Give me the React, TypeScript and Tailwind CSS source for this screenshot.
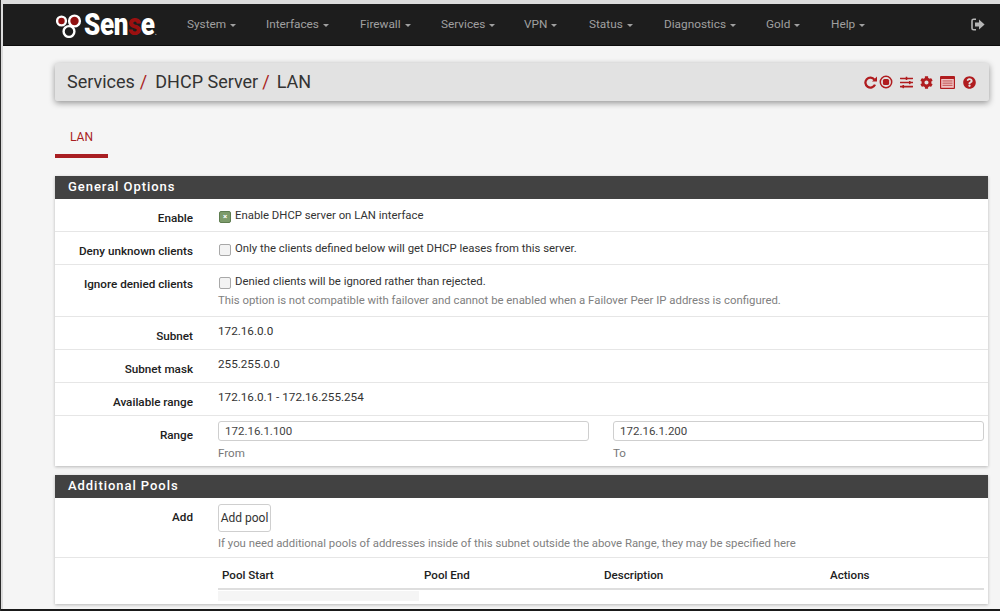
import React from "react";
import { FaSlidersH, FaCog, FaQuestionCircle } from "react-icons/fa";

const nav: [string, string][] = [
  ["System", "w-[79px]"],
  ["Interfaces", "w-[94px]"],
  ["Firewall", "w-[81px]"],
  ["Services", "w-[83px]"],
  ["VPN", "w-[65px]"],
  ["Status", "w-[75px]"],
  ["Diagnostics", "w-[102px]"],
  ["Gold", "w-[65px]"],
  ["Help", "w-[60px]"],
];

function Logo() {
  return (
    <div className="flex items-center w-[132px]">
      <svg width="27" height="26" viewBox="0 0 27 26" className="shrink-0">
        <circle cx="6.5" cy="9" r="4.4" fill="#8f1010" stroke="#fff" strokeWidth="2.4" />
        <circle cx="19.5" cy="9" r="5.4" fill="#8f1010" stroke="#fff" strokeWidth="2.4" />
        <circle cx="14" cy="19.5" r="5.4" fill="#1d1d1d" stroke="#fff" strokeWidth="2.4" />
      </svg>
      <span className="text-[31px] font-black text-white leading-none tracking-[-0.5px] inline-block origin-left scale-x-[0.84] font-['Roboto',sans-serif] whitespace-nowrap ml-[2px]">
        Sen<span className="text-[#9c1010]">s</span>e<span className="text-[8px] text-[#aaa]">.</span>
      </span>
    </div>
  );
}

function LabelCell({ label }: { label: string }) {
  return <div className="w-[138px] shrink-0 pt-[12px] text-right text-[11.7px] leading-[15px] font-medium text-[#212121]">{label}</div>;
}

function Row({ label, children, className = "" }: { label: string; children: React.ReactNode; className?: string }) {
  return (
    <div className={`flex border-b border-[#e6e6e6] ${className}`}>
      <LabelCell label={label} />
      <div className="flex-1 pl-[25px] min-w-0">{children}</div>
    </div>
  );
}

function Check({ on, text }: { on?: boolean; text: string }) {
  return (
    <div className="flex items-center pt-[9px] leading-[15px] text-[11.35px] text-[#333]">
      <span className={`w-[12px] h-[12px] ml-[1px] mr-[4px] mt-[3px] rounded-[2px] border flex items-center justify-center text-[8px] leading-none font-bold ${on ? "bg-[#7d9b6b] border-[#5f7d50] text-white" : "bg-[#f3f3f3] border-[#a8a8a8]"}`}>
        {on ? "×" : ""}
      </span>
      <span>{text}</span>
    </div>
  );
}

function Value({ text }: { text: string }) {
  return <div className="pt-[7px] text-[11.7px] leading-[15px] text-[#333]">{text}</div>;
}

function Head({ title }: { title: string }) {
  return (
    <div className="h-[23px] bg-[#424242] text-white text-[13px] font-medium tracking-[0.95px] leading-[22px] pl-[13px]">{title}</div>
  );
}

function Field({ value, hint }: { value: string; hint: string }) {
  return (
    <div className="w-[371px]">
      <div className="h-[20px] border border-[#cfcfcf] rounded-[3px] bg-white pl-[6px] text-[11.5px] leading-[18px] text-[#444]">{value}</div>
      <div className="mt-[5px] text-[11.6px] leading-[15px] text-[#777]">{hint}</div>
    </div>
  );
}

function RedoIcon() {
  return (
    <svg width="13" height="13" viewBox="0 0 13 13" className="mr-[2px]">
      <path d="M10.4 3.6A5 5 0 1 0 11 8.6" fill="none" stroke="#b01c1f" strokeWidth="2.3" />
      <path d="M8 5.4 13 5.4 13 .4Z" fill="#b01c1f" />
    </svg>
  );
}

function StopIcon() {
  return (
    <svg width="14" height="14" viewBox="0 0 14 14" className="mr-[7px]">
      <circle cx="7" cy="7" r="5.7" fill="none" stroke="#b01c1f" strokeWidth="1.5" />
      <rect x="3.9" y="3.9" width="6.2" height="6.2" rx="1.6" fill="#b01c1f" />
    </svg>
  );
}

function ListIcon() {
  return (
    <svg width="15" height="13" viewBox="0 0 15 13" className="mr-[8px]">
      <rect x="0" y="0" width="15" height="13" rx="1" fill="#b01c1f" />
      <rect x="1.2" y="3" width="12.6" height="8.8" fill="#f0c4c4" />
      <rect x="2.5" y="4.4" width="10" height="1.1" fill="#c65a5a" />
      <rect x="2.5" y="6.6" width="10" height="1.1" fill="#c65a5a" />
      <rect x="2.5" y="8.8" width="10" height="1.1" fill="#c65a5a" />
    </svg>
  );
}

function LogoutIcon() {
  return (
    <svg width="14" height="13" viewBox="0 0 14 13" className="ml-auto mr-[15px]">
      <path d="M5 1.2H2.6C1.7 1.2 1 1.9 1 2.8v7.4c0 .9.7 1.6 1.6 1.6H5" fill="none" stroke="#b5b5b5" strokeWidth="1.6" />
      <path d="M4 4.6h4V1.6L13.6 6.5 8 11.4V8.4H4z" fill="#b5b5b5" />
    </svg>
  );
}

export default function App() {
  return (
    <div className="w-[1000px] h-[611px] overflow-hidden bg-[#dcdcdc] border-l border-[#2a2a2a] pt-[4px] font-['Roboto',sans-serif]">
      <div className="h-[605px] ml-[2px] bg-[#f5f5f5] flex flex-col">
        <header className="h-[42px] shrink-0 bg-[#1d1d1d] border-b border-[#0c0c0c] flex items-center pl-[52px] text-[11.8px] text-[#a0a0a0]">
          <Logo />
          <nav className="flex items-center">
            {nav.map(([n, w]) => (
              <div key={n} className={`${w} flex items-center`}>
                <span>{n}</span>
                <span className="ml-[4px] mt-[1px] w-0 h-0 border-x-[3px] border-x-transparent border-t-[3px] border-t-[#a0a0a0]" />
              </div>
            ))}
          </nav>
          <LogoutIcon />
        </header>

        <main className="flex-1 pl-[52px] pr-[3px] min-h-0 overflow-hidden">
          <div className="mt-[17px] w-[934px] h-[38px] bg-[#e2e2e2] rounded-[2px] shadow-[0_2px_6px_rgba(0,0,0,0.4)] flex items-center pl-[12px] pr-[13px]">
            <div className="text-[18px] text-[#333] whitespace-nowrap flex-1 flex pb-[1px]">
              <span>Services</span>
              <span className="text-[#a91e22] ml-[5px]">/</span>
              <span className="ml-[8px]">DHCP Server</span>
              <span className="text-[#a91e22] ml-[4px]">/</span>
              <span className="ml-[7px]">LAN</span>
            </div>
            <div className="flex items-center text-[#b01c1f] text-[13px]">
              <RedoIcon />
              <StopIcon />
              <FaSlidersH className="mr-[7px]" />
              <FaCog className="mr-[7px]" />
              <ListIcon />
              <FaQuestionCircle />
            </div>
          </div>

          <div className="mt-[24px] w-[53px] h-[33px] border-b-[4px] border-[#a91e22] text-center text-[12px] leading-[24px] text-[#a91e22]">LAN</div>

          <section className="mt-[18px] w-[933px] bg-white shadow-[0_1px_3px_rgba(0,0,0,0.25)]">
            <Head title="General Options" />
            <Row label="Enable" className="h-[33px]"><Check on text="Enable DHCP server on LAN interface" /></Row>
            <Row label="Deny unknown clients" className="h-[33px]"><Check text="Only the clients defined below will get DHCP leases from this server." /></Row>
            <Row label="Ignore denied clients" className="h-[52px]">
              <Check text="Denied clients will be ignored rather than rejected." />
              <div className="mt-[4px] text-[11.37px] leading-[15px] text-[#808080]">This option is not compatible with failover and cannot be enabled when a Failover Peer IP address is configured.</div>
            </Row>
            <Row label="Subnet" className="h-[33px]"><Value text="172.16.0.0" /></Row>
            <Row label="Subnet mask" className="h-[33px]"><Value text="255.255.0.0" /></Row>
            <Row label="Available range" className="h-[33px]"><Value text="172.16.0.1 - 172.16.255.254" /></Row>
            <div className="flex h-[50px]">
              <LabelCell label="Range" />
              <div className="flex-1 pl-[25px] pt-[5px] flex gap-[24px]">
                <Field value="172.16.1.100" hint="From" />
                <Field value="172.16.1.200" hint="To" />
              </div>
            </div>
          </section>

          <section className="mt-[9px] w-[933px] bg-white shadow-[0_1px_3px_rgba(0,0,0,0.25)]">
            <Head title="Additional Pools" />
            <Row label="Add" className="h-[60px]">
              <button className="mt-[6px] h-[28px] w-[53px] border border-[#cfcfcf] rounded-[3px] bg-white text-[12px] text-[#333]">Add pool</button>
              <div className="mt-[4px] text-[11.35px] leading-[15px] text-[#808080] whitespace-nowrap">If you need additional pools of addresses inside of this subnet outside the above Range, they may be specified here</div>
            </Row>
            <div className="flex h-[46px]">
              <div className="w-[163px] shrink-0" />
              <div className="w-[766px]">
                <div className="h-[32px] border-b-[2px] border-[#dedede] flex text-[11.6px] font-medium text-[#212121] leading-[35px]">
                  <div className="w-[202px] pl-[4px]">Pool Start</div>
                  <div className="w-[184px] pl-[4px]">Pool End</div>
                  <div className="w-[226px]">Description</div>
                  <div>Actions</div>
                </div>
                <div className="mt-[1px] w-[201px] h-[10px] bg-[#f5f5f5]" />
              </div>
            </div>
          </section>
        </main>
      </div>
      <div className="h-[2px] bg-[#1a1a1a]" />
    </div>
  );
}
